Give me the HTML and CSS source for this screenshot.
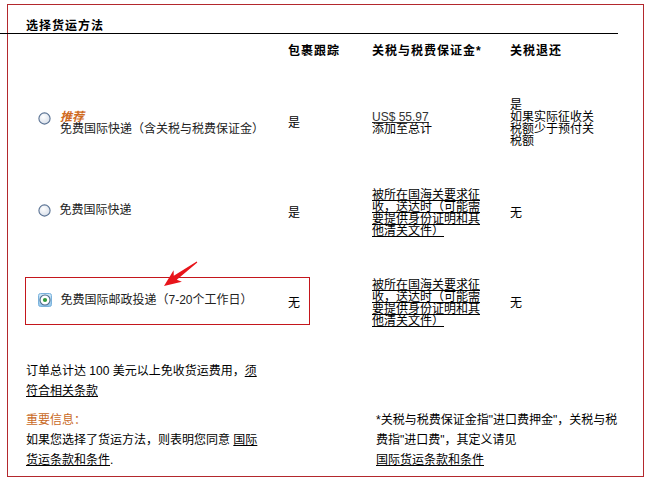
FILE: index.html
```html
<!DOCTYPE html>
<html lang="zh-CN">
<head>
<meta charset="utf-8">
<title>选择货运方法</title>
<link rel="stylesheet" href="styles.css">
</head>
<body>
<div class="box">
  <div class="title">选择货运方法</div>
  <div class="table">
    <div class="th"></div>
    <div class="th">包裹跟踪</div>
    <div class="th">关税与税费保证金*</div>
    <div class="th">关税退还</div>

    <div class="cell opt opt-top">
      <svg class="radio" viewBox="0 0 13 13" width="13" height="13"><defs><radialGradient id="g1" cx="0.4" cy="0.35" r="0.7"><stop offset="0" stop-color="#ffffff"/><stop offset="1" stop-color="#d6dde8"/></radialGradient></defs><circle cx="6.5" cy="6.5" r="5.6" fill="url(#g1)" stroke="#5b7394" stroke-width="1.1"/></svg>
      <div class="label"><em class="rec">推荐</em><br>免费国际快递（含关税与税费保证金）</div>
    </div>
    <div class="cell">是</div>
    <div class="cell tight"><span class="u latin">US$ 55.97</span><br>添加至总计</div>
    <div class="cell tight">是<br>如果实际征收关<br>税额少于预付关<br>税额</div>

    <div class="cell opt opt-one">
      <svg class="radio" viewBox="0 0 13 13" width="13" height="13"><defs><radialGradient id="g2" cx="0.4" cy="0.35" r="0.7"><stop offset="0" stop-color="#ffffff"/><stop offset="1" stop-color="#d6dde8"/></radialGradient></defs><circle cx="6.5" cy="6.5" r="5.6" fill="url(#g2)" stroke="#5b7394" stroke-width="1.1"/></svg>
      <div class="label">免费国际快递</div>
    </div>
    <div class="cell">是</div>
    <div class="cell tight"><span class="u">被所在国海关要求征</span><br><span class="u">收，送达时（可能需</span><br><span class="u">要提供身份证明和其</span><br><span class="u">他清关文件）</span></div>
    <div class="cell">无</div>

    <div class="cell opt opt-one">
      <svg class="radio" viewBox="0 0 14 14" width="14" height="14"><defs><linearGradient id="g3" x1="0" y1="0" x2="0" y2="1"><stop offset="0" stop-color="#cfe8f8"/><stop offset="1" stop-color="#8fc4ea"/></linearGradient></defs><rect x="0.5" y="0.5" width="13" height="13" rx="2" fill="url(#g3)" stroke="#7bb2dc"/><circle cx="7" cy="7" r="5" fill="#ffffff" stroke="#4f6c8c" stroke-width="1.1"/><circle cx="7" cy="7" r="2.1" fill="#2f9a3a"/></svg>
      <div class="label">免费国际邮政投递（7-20个工作日）</div>
    </div>
    <div class="cell">无</div>
    <div class="cell tight"><span class="u">被所在国海关要求征</span><br><span class="u">收，送达时（可能需</span><br><span class="u">要提供身份证明和其</span><br><span class="u">他清关文件）</span></div>
    <div class="cell">无</div>
  </div>

  <div class="notes">
    <p class="free">订单总计达 100 美元以上免收货运费用，<span class="u">须</span><br><span class="u">符合相关条款</span></p>
    <div class="info">
      <div class="info-left">
        <div class="important">重要信息：</div>
        <div>如果您选择了货运方法，则表明您同意 <span class="u">国际</span><br><span class="u">货运条款和条件</span>.</div>
      </div>
      <div class="info-right">*关税与税费保证金指"进口费押金"，关税与税<br>费指"进口费"，其定义请见<br><span class="u">国际货运条款和条件</span></div>
    </div>
  </div>

  <div class="highlight"></div>
  <svg class="arrow" viewBox="160 258 42 32" width="42" height="32"><polygon points="164,286 173.6,270.3 173.8,275.8 196.7,261.6 197.3,262.4 176.8,279.8 181.9,281.7" fill="#e8141a"/></svg>
</div>
</body>
</html>
```

FILE: styles.css
```css
html, body {
  margin: 0;
  padding: 0;
  background: #ffffff;
}
body {
  font-family: "Liberation Sans", "Noto Sans CJK SC", sans-serif;
  font-size: 12px;
  color: #111;
}
.box {
  position: relative;
  margin: 4px 0 0 7px;
  width: 635px;
  border: 1px solid #b3282d;
  padding: 0 0 6px 0;
}
.title {
  margin-left: -8px;
  width: 592px;
  padding: 14px 0 0 26px;
  line-height: 14px;
  font-weight: bold;
  letter-spacing: 1px;
  color: #000;
  border-bottom: 1px solid #000;
}
.table {
  display: grid;
  grid-template-columns: 280px 84px 138px 1fr;
  grid-template-rows: 44px 90px 90px 90px;
}
.th {
  align-self: start;
  padding-top: 10px;
  line-height: 14px;
  font-weight: bold;
  letter-spacing: 1px;
  color: #000;
}
.cell {
  align-self: center;
  line-height: 14px;
  color: #000;
  white-space: nowrap;
}
.tight {
  line-height: 12px;
}
.opt {
  display: flex;
  padding-left: 30px;
  gap: 9px;
  color: #222;
}
.opt-top {
  align-items: flex-start;
  line-height: 12px;
}
.opt-top .radio {
  margin-top: 1px;
}
.opt-one {
  align-items: center;
  margin-bottom: 6px;
}
.opt-one .radio {
  margin-left: -0.5px;
}
.radio {
  flex: none;
  display: block;
}
.rec {
  color: #cf6a1d;
  font-weight: bold;
  font-style: italic;
}
.u {
  text-decoration: underline;
}
.latin {
  color: #333;
}
.notes {
  margin-top: 13px;
  padding-left: 18px;
  line-height: 20px;
  color: #000;
  white-space: nowrap;
}
.free {
  margin: 0;
  width: 236px;
}
.info {
  display: flex;
  margin-top: 9px;
}
.info-left {
  width: 236px;
  margin-right: 114px;
}
.info-right {
  width: 246px;
}
.important {
  color: #c96a26;
}
.highlight {
  position: absolute;
  left: 17px;
  top: 272px;
  width: 283px;
  height: 46px;
  border: 1px solid #c4161c;
}
.arrow {
  position: absolute;
  left: 152px;
  top: 253px;
  display: block;
}
```
